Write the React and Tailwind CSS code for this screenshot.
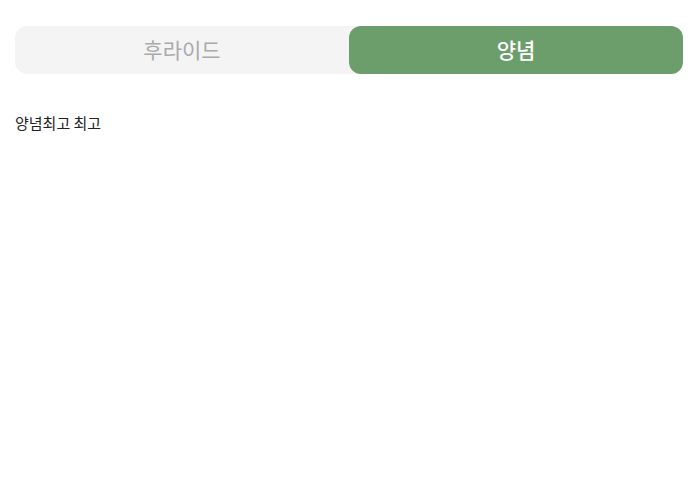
import React, { useState } from 'react';

const tabs = ['후라이드', '양념'];

export default function App() {
  const [active, setActive] = useState('양념');

  return (
    <div className="min-h-screen bg-white pl-[15px] pr-[10px] pt-[26px] font-['Noto_Sans_CJK_KR',sans-serif]">
      {/* Tabs */}
      <div className="flex h-[48px] rounded-[12px] bg-[#f4f4f4]">
        {tabs.map((tab) => (
          <button
            key={tab}
            onClick={() => setActive(tab)}
            className={`flex-1 flex items-center justify-center rounded-[12px] text-[21px] ${
              active === tab ? 'bg-[#6b9e6b] text-white font-medium' : 'text-[#aaaaaa] font-normal'
            }`}
          >
            {tab}
          </button>
        ))}
      </div>

      <p className="mt-[38px] text-[15px] font-normal text-[#222222] leading-[22px]">
        {active}최고 최고
      </p>
    </div>
  );
}
